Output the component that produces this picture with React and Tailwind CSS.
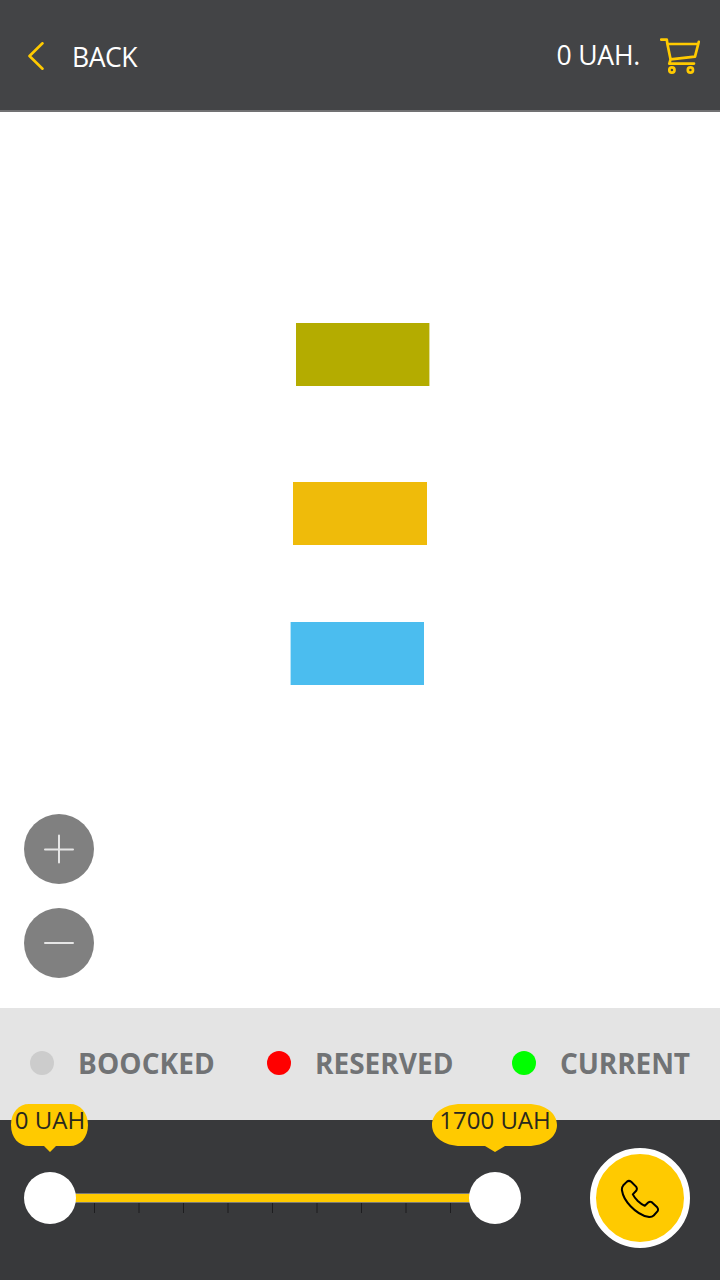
const legend = [
  { label: "BOOCKED", dot: "bg-[#cccccc]", spacing: "tracking-[0.1px]" },
  { label: "RESERVED", dot: "bg-[#ff0000]", spacing: "" },
  { label: "CURRENT", dot: "bg-[#00ff00]", spacing: "tracking-[-0.1px]" },
];

const ticks = [0, 1, 2, 3, 4, 5, 6, 7, 8];

function Header() {
  return (
    <header className="flex h-28 shrink-0 items-center border-b-2 border-[#717173] bg-[#434446] pl-7 pr-5 text-[26.6px] leading-9 text-white">
      <button className="flex items-center">
        <svg className="mt-0.5 h-7 w-4" viewBox="0 0 16 28" fill="none" stroke="#ffca00" strokeWidth="2.6" strokeLinecap="round" strokeLinejoin="round">
          <path d="M14.5 1.3 1.5 14l13 12.7" />
        </svg>
        <span className="ml-7 mt-1 tracking-[-0.5px]">BACK</span>
      </button>
      <div className="ml-auto flex items-center">
        <span className="tracking-[-0.25px]">0 UAH.</span>
        <svg className="ml-5 mt-0.5 h-9 w-10" viewBox="0 0 40 36" fill="none" stroke="#ffca00" strokeWidth="2.7" strokeLinecap="round" strokeLinejoin="round">
          <path d="M1.2 1.6H6.8L7.4 6 10.6 21.4 9.3 25.6H34M7.4 6H37.8M38.8 3.8 35 18.6 10.6 21.4" />
          <circle cx="11.9" cy="32" r="2.6" />
          <circle cx="30.4" cy="32" r="2.6" />
        </svg>
      </div>
    </header>
  );
}

function ZoomButton({ plus }) {
  return (
    <button className="flex size-[70px] items-center justify-center rounded-full bg-[#808080]">
      <svg className="size-[30px]" viewBox="0 0 30 30" stroke="#e6e6e6" strokeWidth="2" strokeLinecap="round">
        <path d={plus ? "M1 15.5H29M15 1.5V28.5" : "M1 15H29"} />
      </svg>
    </button>
  );
}

export default function App() {
  return (
    <div className="flex h-[1280px] w-[720px] flex-col overflow-hidden bg-white font-['Open_Sans','Noto_Sans',sans-serif]">
      <Header />
      <main className="relative flex-1">
        <svg className="absolute left-[290px] top-[211px]" width="140" height="362">
          <rect x="6" y="0" width="133.4" height="63" fill="#b4ac00" />
          <rect x="3" y="159" width="134" height="63" fill="#efbb0a" />
          <rect x="0.6" y="299" width="133.4" height="63" fill="#4bbdef" />
        </svg>
        <div className="absolute bottom-[30px] left-6 flex flex-col gap-6">
          <ZoomButton plus />
          <ZoomButton />
        </div>
      </main>
      <section className="grid h-28 shrink-0 grid-cols-[237px_245px_1fr] items-center bg-[#e4e4e4] pb-0.5 pl-[30px] text-[28px] font-bold leading-9 text-[#717375]">
        {legend.map((item) => (
          <div key={item.label} className="flex items-center gap-6">
            <span className={`size-6 rounded-full ${item.dot}`} />
            <span className={item.spacing}>{item.label}</span>
          </div>
        ))}
      </section>
      <footer className="flex h-40 shrink-0 items-start justify-between bg-[#38393b] pl-6 pr-[30px] pt-7">
        <div className="relative mt-6 flex h-[52px] w-[497px] items-center">
          <div className="mx-[26px] h-2.5 flex-1 border-y border-[#7b7b75] bg-[#ffca00]" />
          <svg className="absolute left-[26px] top-[31px]" width="445" height="10">
            {ticks.map((tick) => (
              <rect key={tick} x={44 + tick * 44.5} y="0" width="1" height="10" fill="#1d1d1f" />
            ))}
          </svg>
          <span className="absolute left-0 top-0 size-[52px] rounded-full bg-white" />
          <span className="absolute right-0 top-0 size-[52px] rounded-full bg-white" />
          <div className="absolute -left-[13px] -top-[68px] h-12 w-[77px] text-center text-2xl text-[#28281f]">
            <svg className="absolute inset-0" width="77" height="48" fill="#ffca00">
              <path d="M18 0H59C69 0 77 8 77 21S69 42 59 42H45L39 48 33 42H18C8 42 0 34 0 21S8 0 18 0Z" />
            </svg>
            <span className="relative left-[0.5px] whitespace-nowrap">0 UAH</span>
          </div>
          <div className="absolute left-[408px] -top-[68px] h-12 w-[125px] text-center text-2xl text-[#28281f]">
            <svg className="absolute inset-0" width="125" height="48" fill="#ffca00">
              <path d="M29 0H96C113 0 125 9 125 21S113 42 96 42H73L63 48 53 42H29C12 42 0 33 0 21S12 0 29 0Z" />
            </svg>
            <span className="relative left-[0.5px] whitespace-nowrap">1700 UAH</span>
          </div>
        </div>
        <button className="flex size-[100px] items-center justify-center rounded-full border-[6px] border-white bg-[#ffca00]">
          <svg className="mt-0.5 size-10" viewBox="0 0 40 40" fill="none" stroke="#000" strokeWidth="2" strokeLinecap="round" strokeLinejoin="round">
            <path d="M3.3 6.3 7 2.6Q9 1 11.2 2.8L16.3 7.9Q17.5 10 16.2 11.8L12.8 15.4Q14.5 18.7 17.8 22 21.2 25.2 24.8 26.8L28.2 23.5Q30 22 31.8 23.2L37.2 28.3Q38.8 30.3 37.4 32.4L33.7 36.5Q31.5 38.5 28 37.8 19 36 10.6 27.2 3.2 19.5 2 11.5 1.5 8.5 3.3 6.3Z" />
          </svg>
        </button>
      </footer>
    </div>
  );
}
